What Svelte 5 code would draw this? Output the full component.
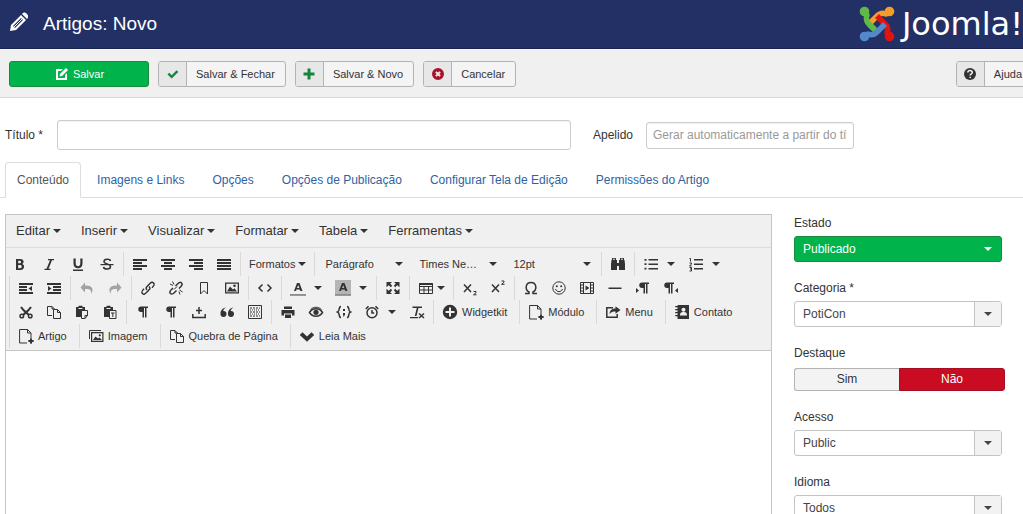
<!--
  App.svelte
  Joomla article editor: header, action toolbar, title fields, tabs,
  rich text editor and the publishing sidebar.
-->
<script lang="ts">
  type Item = {
    icon?: string;
    text?: string;
    label: string;
    kind?: 'split' | 'menu' | 'list' | 'text';
    dim?: boolean;
  };

  const TABS = [
    'Conteúdo',
    'Imagens e Links',
    'Opções',
    'Opções de Publicação',
    'Configurar Tela de Edição',
    'Permissões do Artigo',
  ];

  const MENUS = ['Editar', 'Inserir', 'Visualizar', 'Formatar', 'Tabela', 'Ferramentas'];

  const ACTIONS = [
    { icon: 'check', text: 'Salvar & Fechar', color: '#17833f' },
    { icon: 'plus', text: 'Salvar & Novo', color: '#17833f' },
    { icon: 'cancel', text: 'Cancelar', color: '#a8122a' },
  ];

  // 16x16 glyphs, drawn in currentColor
  const PILCROW = '<path d="M7 2.500h7v1.500h-1.500v9.500h-1.500v-9.500h-1v9.500h-1.500v-5.500h-1.500a2.700 2.700 0 0 1 0-5.500z"/>';
  const NEW_FILE = '<path class="l" d="M9 15H1.600V1.500H9.500L13 5v5M9.500 1.500V5H13M13 10.500v5M10.500 13h5"/><path d="M12 10.500h2v5h-2zM10.500 12h5v2h-5z"/>';
  const COPY = '<path class="l" d="M6 11.500H1.500v-9H6l2.500 2.500v1M6 2.500V5h2.500M7.500 5.500h4l3 3v6h-7zM11.500 5.500v3h3"/>';

  const ICONS: Record<string, string> = {
    edit: '<path d="M2 3h7L7 5H4v7h7V9l2-2v7H2z"/><path d="M6 8l6-6 2 2-6 6-2.500.5z"/>',
    check: '<path d="M2.500 8.500l1.700-1.700L6.700 9.200l4.900-4.900 1.700 1.700-6.600 6.600z"/>',
    plus: '<path d="M6.500 2.500h3v4h4v3h-4v4h-3v-4h-4v-3h4z"/>',
    cancel: '<path fill-rule="evenodd" d="M8 2a6 6 0 1 1 0 12A6 6 0 0 1 8 2zM5.200 6.600L6.600 8 5.200 9.400l1.400 1.400L8 9.400l1.400 1.400 1.400-1.400L9.400 8l1.400-1.400-1.400-1.400L8 6.600 6.600 5.200z"/>',
    help: '<circle cx="8" cy="8" r="6"/><path d="M5.800 6.500C6 3.800 10.500 4 10.300 6.500 10.200 8 8.200 7.900 8.200 9.500M8.200 10.700v1.300" fill="none" stroke="#eee" stroke-width="1.600"/>',
    bold: '<path fill-rule="evenodd" d="M4 3h4.500c3.500 0 4 4 1.700 5 3 1 2.300 6-1.500 6H4zM6.200 4.800v2.400H8c1.500 0 1.500-2.400 0-2.400zM6.200 9v3.200h2c2 0 2-3.200 0-3.200z"/>',
    italic: '<path d="M7 3h6v1.300h-2L7.500 12.700h2V14h-6v-1.300h2L9 4.300H7z"/>',
    underline: '<path d="M3.500 2.500h2.200v5c0 3.500 4.600 3.500 4.600 0v-5h2.200v5.300c0 6-9 6-9 0zM3 13.500h10V15H3z"/>',
    strike: '<path class="m" d="M11.500 5C11 2.500 5 2.500 5 5.500c0 3 6.500 1.800 6.500 5 0 3.500-6.500 3.300-7 .5"/><path d="M1.500 8h13v1.200h-13z"/>',
    left: '<path d="M1 3h14v2H1zM1 6h9v2H1zM1 9h14v2H1zM1 12h9v2H1z"/>',
    center: '<path d="M1 3h14v2H1zM4 6h8v2H4zM1 9h14v2H1zM4 12h8v2H4z"/>',
    right: '<path d="M1 3h14v2H1zM6 6h9v2H6zM1 9h14v2H1zM6 12h9v2H6z"/>',
    justify: '<path d="M1 3h14v2H1zM1 6h14v2H1zM1 9h14v2H1zM1 12h14v2H1z"/>',
    find: '<path d="M2 2h4v2h1v3h2V4h1V2h4v2h.5L15 8v6H9v-4H7v4H1V8l.500-4H2z"/><path d="M3 3.200h2M11 3.200h2" stroke="#f0f0f0"/>',
    bullets: '<path d="M5.500 3H15v1.500H5.500zM5.500 7.500H15V9H5.500zM5.500 12H15v1.500H5.500zM1.500 3h2v1.800h-2zM1.500 7.300h2v1.800h-2zM1.500 11.800h2v1.800h-2z"/>',
    numbers: '<path d="M6 3h9v1.500H6zM6 7.500h9V9H6zM6 12h9v1.500H6z"/><path class="l" d="M1.500 2.500h1v3M1.500 7h2v1l-2 2h2M1.500 11.500h2v1.500h-1.500M3.500 13v2h-2"/>',
    outdent: '<path d="M1 3h14v2H1zM1 6h8v2H1zM1 9h8v2H1zM1 12h14v2H1zM14 6v5l-3.500-2.500z"/>',
    indent: '<path d="M1 3h14v2H1zM7 6h8v2H7zM7 9h8v2H7zM1 12h14v2H1zM2 6v5l3.500-2.500z"/>',
    undo: '<path d="M6 2.500v3c8-.500 9 4.500 6 8.500.7-4-1-5.500-6-5v3.500L1.500 7.500z"/>',
    redo: '<path d="M10 2.500v3C2 5 1 10 4 14c-.7-4 1-5.500 6-5v3.500l4.500-5z"/>',
    link: '<path class="m" d="M7 10c-2-2-.5-3 2-5.500s3.200-2.800 4.500-1.500 1 2.300-1.500 4.800M9 6.500c2 2 .5 3-2 5.500s-3.200 2.800-4.500 1.500-1-2.300 1.500-4.800"/>',
    unlink: '<path class="m" d="M7.500 6L9.500 4c2-2 3-2 4-1s1 2.200-1 4l-1.500 1.500M8.500 10.500l-2 2c-2 2-3 2-4 1s-1-2.200 1-4L5 8"/><path class="l" d="M2 4l3 1.500M4.500 1.500L6 4.500M11 11.500l1 3M11.500 10l3 2M6 9.500l3-3"/>',
    bookmark: '<path class="l" d="M4.500 2.500h7v11.500L8 10.500 4.500 14z"/>',
    image: '<path fill-rule="evenodd" d="M1 2.500h14v11H1zM2.300 3.800v8.400h11.400V3.800z"/><path d="M3 11.500l3-5 3 3 1.500-1.200L13 11.500z"/><circle cx="10.500" cy="5.800" r="1.300"/>',
    code: '<path class="m" d="M5.500 4.500L2 8l3.500 3.500M10.500 4.500L14 8l-3.500 3.500"/>',
    forecolor: '<path fill-rule="evenodd" d="M7 3h2.500l3 8h-2.200l-.6-1.500H6.500L6 11H4zM8.200 5L7 8h2.300z"/><path d="M0 14.200h16v1.500H0z" opacity=".65"/>',
    backcolor: '<path d="M0 0h16v14H0z" fill="#b5b5b5"/><path fill-rule="evenodd" d="M7 3h2.500l3 8h-2.200l-.6-1.500H6.500L6 11H4zM8.200 5L7 8h2.300z"/><path d="M0 14.200h16v1.500H0z" opacity=".65"/>',
    fullscreen: '<path d="M1.500 2H7L5.200 3.800l2 2-1.400 1.400-2-2L1.500 7.200zM14.500 2H9l1.800 1.800-2 2 1.400 1.400 2-2 2.300 2zM1.500 14H7l-1.800-1.800 2-2-1.400-1.400-2 2-2.300-2zM14.500 14H9l1.800-1.800-2-2 1.400-1.400 2 2 2.300-2z"/>',
    table: '<path class="l" d="M1.500 3.500h13v10h-13zM1.500 6.500h13M1.500 10h13M6 6.500v7M10.500 6.500v7"/><path d="M1.500 3h13v2h-13z"/>',
    sub: '<path class="m" d="M2 4.500l7 7.500M9 4.500L2 12"/><path class="l" d="M11.500 11.500h2.500v1.300l-2.500 2h3"/>',
    sup: '<path class="m" d="M2 4.500l7 7.500M9 4.500L2 12"/><path class="l" d="M11.500 1h2.500v1.300l-2.500 2h3"/>',
    omega: '<path class="m" d="M2 13.500h4V12C1.500 9.500 2.500 2.500 8 2.500s6.500 7 2 9.500v1.500h4"/>',
    smile: '<circle class="l" cx="8" cy="8" r="6.200"/><circle cx="5.800" cy="6.300" r="1"/><circle cx="10.200" cy="6.300" r="1"/><path class="l" d="M4.500 9c1 3.500 6 3.500 7 0"/>',
    media: '<path class="l" d="M1.500 2.500h13v11h-13zM4.500 2.500v11M11.500 2.500v11M1.500 5h3M1.500 8h3M1.500 11h3M11.500 5h3M11.500 8h3M11.500 11h3"/><path d="M6.500 5.500l4 2.500-4 2.500z"/>',
    hr: '<path d="M1.500 7.500h13V9h-13z"/>',
    ltr: PILCROW + '<path d="M1 8v5l3-2.500z"/>',
    rtl: '<g transform="translate(-3 0)">' + PILCROW + '</g><path d="M15 8v5l-3-2.500z"/>',
    cut: '<path class="h" d="M3 3C5.500 7 9 9 11 11M13 3C10.500 7 7 9 5 11"/><circle class="m" cx="3.800" cy="12" r="1.800"/><circle class="m" cx="12.200" cy="12" r="1.800"/>',
    copy: COPY,
    paste: '<path d="M2 3h2.500V1.800h4V3H11v3H7.500v7H2z"/><path d="M4.500 4.500h4" stroke="#f0f0f0"/><path class="l" d="M7.500 6.500h6v5L11 14.500H7.500zM13.500 11.500H11v3"/>',
    pastetext: '<path d="M2 3h2.500V1.800h4V3H11v3H7.500v7H2z"/><path d="M4.500 4.500h4" stroke="#f0f0f0"/><path class="l" d="M7.500 6.500h6.500v8H7.500zM9 9h3.500M10.800 9v4"/>',
    pilcrow: '<g transform="translate(-1 0)">' + PILCROW + '</g>',
    nonbreaking: '<path class="m" d="M1.800 10v3.500h12.400V10M8 3v7M5 6.500h6"/>',
    quote: '<path d="M7 3.500C4.500 5 4.300 6 4.300 7a3 3 0 1 1-2.800 3C1.300 6.500 3.500 4 7 3.500zM14.500 3.500C12 5 11.800 6 11.800 7A3 3 0 1 1 9 10c-.2-3.500 2-6 5.500-6.500z"/>',
    template: '<path class="l" d="M1.500 1.500h13v13h-13z"/><path d="M3 4h10M3 8h10M3 12h10" stroke="currentColor" stroke-width="1" stroke-dasharray="2 1"/><path d="M3 6h10M3 10h10" stroke="currentColor" stroke-width="1" stroke-dasharray="1 1"/>',
    print: '<path d="M4 2.500h8V5H4zM1.500 6h13v5.500H12V9.500H4v2H1.500zM5 10.500h6V14H5z"/>',
    preview: '<path class="m" d="M1.500 8.500c3-5 10-5 13 0-3 5-10 5-13 0z"/><circle cx="8" cy="8.300" r="2.600"/><path class="l" d="M2.500 5.500c3-3 8-3 11 0"/>',
    snippet: '<path class="m" d="M5 2.500C2 2.500 4.500 7 1.500 8 4.500 9 2 13.500 5 13.500M11 2.500c3 0 .5 4.500 3.500 5.500-3 1-.5 5.500-3.500 5.500"/><path d="M7 5h2v2H7zM7 9h2v2l-1.500 1.500H6.800L7.500 11H7z"/>',
    clock: '<circle class="m" cx="8" cy="8.800" r="5"/><path class="m" d="M8 6v3h2.200M1.800 5L4.500 2.200M11.500 2.200L14.200 5"/>',
    clear: '<path d="M3.500 2.500H13V4H9.500L7.500 12H5.800l2-8H3.500zM1 13h8v1.300H1z"/><path class="m" d="M10 9.500l5 4.500M15 9.500L10 14"/>',
    widgetkit: '<path fill-rule="evenodd" d="M8 .8a7.200 7.200 0 1 1 0 14.400A7.200 7.200 0 0 1 8 .8zM7 3.500V7H3.500v2H7v3.500h2V9h3.500V7H9V3.500z"/>',
    newfile: NEW_FILE,
    share: '<path class="m" d="M8 3.800H1.800v9.400h10.400V10"/><path d="M10.500 2.200L15.500 6l-5 3.800V7.500C8 7.500 6 8 4.500 10c.2-4 2.800-5.500 6-5.500z"/>',
    contact: '<path d="M3.500 1H15v14H3.500zM1.200 2h3v1.200h-3zM1.200 5h3v1.200h-3zM1.200 8h3v1.200h-3zM1.200 11h3v1.200h-3z"/><circle cx="9.500" cy="5.800" r="2" fill="#f0f0f0"/><path d="M6 11.500c0-3 1.500-3.500 3.500-3.500s3.500.5 3.500 3.500z" fill="#f0f0f0"/>',
    pictures: '<path class="l" d="M1.500 11V2.500H13"/><path fill-rule="evenodd" d="M3 4h12.500v10H3zM4.200 5.200v7.600h10.100V5.200z"/><path d="M5 12l2.500-3.500L10 10.500l1.500-1L14 12z"/><circle cx="11.800" cy="7.300" r="1.100"/>',
    chevron: '<path d="M.8 7l2.700-2.700L8 8.500l4.500-4.200L15.200 7 8 13.800z"/>',
  };

  const ROWS: Item[][][] = [
    [
      [
        { icon: 'bold', label: 'Negrito' },
        { icon: 'italic', label: 'Itálico' },
        { icon: 'underline', label: 'Sublinhar' },
        { icon: 'strike', label: 'Riscar' },
      ],
      [
        { icon: 'left', label: 'Alinhar à esquerda' },
        { icon: 'center', label: 'Centralizar' },
        { icon: 'right', label: 'Alinhar à direita' },
        { icon: 'justify', label: 'Justificar' },
      ],
      [{ text: 'Formatos', label: 'Formatos', kind: 'menu' }],
      [
        { text: 'Parágrafo', label: 'Bloco', kind: 'list' },
        { text: 'Times Ne…', label: 'Fonte', kind: 'list' },
        { text: '12pt', label: 'Tamanho', kind: 'list' },
      ],
      [{ icon: 'find', label: 'Localizar' }],
      [
        { icon: 'bullets', label: 'Lista não ordenada', kind: 'split' },
        { icon: 'numbers', label: 'Lista ordenada', kind: 'split' },
      ],
    ],
    [
      [
        { icon: 'outdent', label: 'Diminuir recuo' },
        { icon: 'indent', label: 'Aumentar recuo' },
      ],
      [
        { icon: 'undo', label: 'Desfazer', dim: true },
        { icon: 'redo', label: 'Refazer', dim: true },
      ],
      [
        { icon: 'link', label: 'Inserir link' },
        { icon: 'unlink', label: 'Remover link' },
        { icon: 'bookmark', label: 'Âncora' },
        { icon: 'image', label: 'Inserir imagem' },
      ],
      [{ icon: 'code', label: 'Código fonte' }],
      [
        { icon: 'forecolor', label: 'Cor do texto', kind: 'split' },
        { icon: 'backcolor', label: 'Cor do fundo', kind: 'split' },
      ],
      [{ icon: 'fullscreen', label: 'Tela cheia' }],
      [{ icon: 'table', label: 'Tabela', kind: 'menu' }],
      [
        { icon: 'sub', label: 'Subscrito' },
        { icon: 'sup', label: 'Sobrescrito' },
      ],
      [
        { icon: 'omega', label: 'Caracteres especiais' },
        { icon: 'smile', label: 'Emoticons' },
        { icon: 'media', label: 'Inserir vídeo' },
        { icon: 'hr', label: 'Linha horizontal' },
        { icon: 'ltr', label: 'Da esquerda para a direita' },
        { icon: 'rtl', label: 'Da direita para a esquerda' },
      ],
    ],
    [
      [
        { icon: 'cut', label: 'Recortar' },
        { icon: 'copy', label: 'Copiar' },
        { icon: 'paste', label: 'Colar' },
        { icon: 'pastetext', label: 'Colar como texto' },
      ],
      [
        { icon: 'pilcrow', label: 'Mostrar blocos' },
        { icon: 'pilcrow', label: 'Caracteres invisíveis' },
        { icon: 'nonbreaking', label: 'Espaço não separável' },
        { icon: 'quote', label: 'Citação' },
        { icon: 'template', label: 'Modelo' },
      ],
      [
        { icon: 'print', label: 'Imprimir' },
        { icon: 'preview', label: 'Pré-visualizar' },
        { icon: 'snippet', label: 'Amostra de código' },
        { icon: 'clock', label: 'Data e hora', kind: 'split' },
        { icon: 'clear', label: 'Limpar formatação' },
      ],
      [{ icon: 'widgetkit', text: 'Widgetkit', label: 'Widgetkit', kind: 'text' }],
      [{ icon: 'newfile', text: 'Módulo', label: 'Módulo', kind: 'text' }],
      [{ icon: 'share', text: 'Menu', label: 'Menu', kind: 'text' }],
      [{ icon: 'contact', text: 'Contato', label: 'Contato', kind: 'text' }],
    ],
    [
      [{ icon: 'newfile', text: 'Artigo', label: 'Artigo', kind: 'text' }],
      [{ icon: 'pictures', text: 'Imagem', label: 'Imagem', kind: 'text' }],
      [{ icon: 'copy', text: 'Quebra de Página', label: 'Quebra de Página', kind: 'text' }],
      [{ icon: 'chevron', text: 'Leia Mais', label: 'Leia Mais', kind: 'text' }],
    ],
  ];

  let activeTab = $state(TABS[0]);
  let featured = $state('nao');
  let title = $state('');
  let alias = $state('');
</script>

{#snippet glyph(name: string)}
  <svg class="glyph" viewBox="0 0 16 16" width="16" height="16" aria-hidden="true">{@html ICONS[name]}</svg>
{/snippet}

{#snippet picker(id: string, label: string, value: string, green: boolean)}
  <div class="field">
    <label for={id}>{label}</label>
    <div class="picker" class:green>
      <select {id}><option>{value}</option></select>
      <span class="arrow"><i class="caret"></i></span>
    </div>
  </div>
{/snippet}

<div class="page">
  <header>
    <h1>
      <svg viewBox="0 0 20 20" width="20" height="20" aria-hidden="true">
        <path fill="#fff" fill-rule="evenodd" d="M1 19l1-6L12 3l5 5L7 18zM4 14l2 2L14 8l-2-2z" />
        <path fill="#fff" d="M13 2c1.500-2 3-2 4.500-.5S20 5 18 7z" />
        <path stroke="#fff" stroke-width="1" d="M5 15l8-8" />
      </svg>
      Artigos: Novo
    </h1>
    <a class="logo" href="#joomla">
      <svg viewBox="0 0 36 36" width="36" height="36" aria-hidden="true">
        {#each [['#5fb947', 0], ['#f49c2c', 90], ['#e2140f', 180], ['#5488cb', 270]] as [color, turn]}
          <g transform="rotate({turn} 18 18)" fill="none" stroke={color} stroke-width="5.500" stroke-linejoin="round">
            <circle cx="5.500" cy="5.500" r="4.800" fill={color} stroke="none" />
            <path d="M5.500 5.500L8 9Q6 14 10 18L18 26" />
          </g>
        {/each}
        <path d="M8 15Q8.500 16.500 10 18L15 23" fill="none" stroke="#5fb947" stroke-width="5.500" />
      </svg>
      <span>Joomla!</span>
    </a>
  </header>

  <div class="actions">
    <button class="save">{@render glyph('edit')}Salvar</button>
    {#each ACTIONS as a}
      <button class="action">
        <span class="badge" style="color: {a.color}">{@render glyph(a.icon)}</span>
        <span class="caption">{a.text}</span>
      </button>
    {/each}
    <button class="action help">
      <span class="badge">{@render glyph('help')}</span>
      <span class="caption">Ajuda</span>
    </button>
  </div>

  <div class="titles">
    <label for="title">Título *</label>
    <input id="title" class="title" type="text" bind:value={title} />
    <label for="alias">Apelido</label>
    <input id="alias" class="alias" type="text" placeholder="Gerar automaticamente a partir do título" bind:value={alias} />
  </div>

  <nav class="tabs">
    {#each TABS as t}
      <a href="#tab" class:active={t === activeTab} onclick={() => (activeTab = t)}>{t}</a>
    {/each}
  </nav>

  <main>
    <section class="editor">
      <div class="menubar">
        {#each MENUS as m}
          <button>{m}<i class="caret"></i></button>
        {/each}
      </div>
      <div class="toolbars">
        {#each ROWS as row}
          <div class="row">
            {#each row as group}
              <div class="group">
                {#each group as item}
                  <button class={item.kind ?? 'plain'} class:dim={item.dim} aria-label={item.label}>
                    {#if item.icon}{@render glyph(item.icon)}{/if}
                    {#if item.text}<span>{item.text}</span>{/if}
                    {#if item.kind && item.kind !== 'text'}<i class="caret"></i>{/if}
                  </button>
                {/each}
              </div>
            {/each}
          </div>
        {/each}
      </div>
      <textarea aria-label="Texto do artigo"></textarea>
    </section>

    <aside>
      {@render picker('state', 'Estado', 'Publicado', true)}
      {@render picker('category', 'Categoria *', 'PotiCon', false)}
      <fieldset class="field">
        <legend>Destaque</legend>
        <div class="toggle">
          <label class="yes"><input type="radio" name="featured" value="sim" bind:group={featured} />Sim</label>
          <label class="no"><input type="radio" name="featured" value="nao" bind:group={featured} />Não</label>
        </div>
      </fieldset>
      {@render picker('access', 'Acesso', 'Public', false)}
      {@render picker('language', 'Idioma', 'Todos', false)}
    </aside>
  </main>
</div>

<style>
  :global(html) {
    scrollbar-width: none;
  }
  :global(body) {
    margin: 0;
    background: #fff;
  }
  .page {
    overflow-x: clip;
    font: 12px/18px "Liberation Sans", Arial, sans-serif;
    color: #333;
  }
  .page * {
    box-sizing: border-box;
  }
  button,
  input,
  select,
  textarea {
    margin: 0;
    font: inherit;
    color: inherit;
  }
  button {
    padding: 0;
    border: 0;
    background: none;
    white-space: nowrap;
  }
  .glyph {
    flex: none;
    display: block;
    fill: currentColor;
  }
  .glyph :global(.l),
  .glyph :global(.m),
  .glyph :global(.h) {
    fill: none;
    stroke: currentColor;
    stroke-width: 1px;
  }
  .glyph :global(.m) {
    stroke-width: 1.5px;
  }
  .glyph :global(.h) {
    stroke-width: 2px;
  }
  .caret {
    flex: none;
    border: 4px solid transparent;
    border-top-color: currentColor;
    border-bottom: 0;
  }

  header {
    display: flex;
    justify-content: space-between;
    align-items: center;
    height: 49px;
    padding-left: 9px;
    background: #223066;
    border-bottom: 1px solid #182350;
  }
  h1 {
    display: flex;
    align-items: center;
    gap: 14px;
    margin: 0;
    font-size: 19px;
    line-height: 24px;
    font-weight: 400;
    color: #fff;
  }
  h1 svg {
    margin-bottom: 4px;
  }
  .logo {
    display: flex;
    align-items: center;
    gap: 7px;
    color: #fff;
    font: 32px/36px "DejaVu Sans", sans-serif;
    text-decoration: none;
  }

  .actions {
    display: flex;
    gap: 9px;
    padding: 11px 0 10px 9px;
    background: #f0f0f0;
    border-top: 1px solid #f6f6fa;
    border-bottom: 1px solid #d9d9d9;
    font-size: 11px;
  }
  .save {
    display: flex;
    align-items: center;
    justify-content: center;
    gap: 3px;
    width: 140px;
    height: 26px;
    border: 1px solid #1b8a3d;
    border-radius: 3px;
    background: #00b34a;
    color: #fff;
  }
  .action {
    display: flex;
    height: 26px;
    border: 1px solid #b3b3b3;
    border-radius: 3px;
    background: #f4f4f4;
    overflow: hidden;
  }
  .badge {
    display: flex;
    align-items: center;
    justify-content: center;
    width: 28px;
    height: 24px;
    border-right: 1px solid #b3b3b3;
    background: #e7e7e7;
  }
  .caption {
    padding: 0 10px 0 9px;
    line-height: 24px;
  }
  .help {
    margin-left: auto;
    margin-right: -10px;
  }

  .titles {
    display: flex;
    align-items: center;
    padding: 22px 169px 0 5px;
  }
  .titles input {
    border: 1px solid #ccc;
    border-radius: 3px;
    background: #fff;
    box-shadow: inset 0 1px 1px rgba(0, 0, 0, 0.06);
  }
  .title {
    flex: 1;
    min-width: 0;
    height: 30px;
    margin: 0 22px 0 14px;
    padding: 4px 6px;
  }
  .titles .alias {
    width: 208px;
    height: 27px;
    margin-left: 13px;
    padding: 3px 6px;
  }
  .alias::placeholder {
    color: #999;
    opacity: 1;
  }

  .tabs {
    display: flex;
    gap: 4px;
    margin-top: 12px;
    padding-left: 5px;
    border-bottom: 1px solid #ddd;
  }
  .tabs a {
    padding: 8px 11px;
    margin-bottom: -1px;
    border: 1px solid transparent;
    border-radius: 4px 4px 0 0;
    color: #2f62a3;
    text-decoration: none;
    white-space: nowrap;
  }
  .tabs .active {
    border-color: #ddd;
    border-bottom-color: #fff;
    background: #fff;
    color: #555;
  }

  main {
    display: grid;
    grid-template-columns: minmax(0, 1fr) 211px;
    gap: 22px;
    padding: 16px 18px 0 5px;
  }
  .editor {
    display: flex;
    flex-direction: column;
    border: 1px solid #c5c5c5;
    background: #f0f0f0;
  }
  .menubar {
    display: flex;
    gap: 2px;
    height: 33px;
    padding-left: 1px;
    border-bottom: 1px solid #dcdcdc;
    font-size: 13px;
  }
  .menubar button {
    display: flex;
    align-items: center;
    gap: 3px;
    padding: 0 9px;
  }
  .toolbars {
    padding: 4px 0 2px;
    border-bottom: 1px solid #c5c5c5;
    font-size: 11px;
  }
  .row {
    display: flex;
    flex-wrap: wrap;
    padding-left: 3px;
  }
  .row:first-child {
    padding-left: 0;
  }
  .group {
    display: flex;
    height: 24px;
    padding: 0 2px;
    border-left: 1px solid #d9d9d9;
  }
  .row:first-child .group:first-child {
    gap: 1px;
    padding-left: 0;
    border-left: 0;
  }
  .group button {
    display: flex;
    align-items: center;
    padding: 0 6px;
  }
  .group .menu {
    gap: 3px;
  }
  .group .split {
    gap: 8px;
    padding-right: 7px;
  }
  .group .list {
    justify-content: space-between;
    width: 94px;
    padding: 0 8px;
  }
  .group .text {
    gap: 4px;
    padding-right: 10px;
  }
  .dim {
    color: #a3a3a3;
  }
  textarea {
    flex: 1;
    min-height: 160px;
    border: 0;
    padding: 8px;
    background: #fff;
    resize: none;
  }

  .field {
    margin: 0 0 17px;
    padding: 0;
    border: 0;
    min-width: 0;
  }
  .field > label,
  legend {
    display: block;
    margin-bottom: 4px;
    padding: 0;
  }
  .picker {
    display: grid;
    grid-template-columns: 1fr 27px;
    height: 26px;
    margin-right: 3px;
    border: 1px solid #c4c4c4;
    border-radius: 3px;
    background: #fff;
    color: #444;
  }
  .picker select {
    grid-area: 1 / 1 / 2 / 3;
    appearance: none;
    width: 100%;
    padding: 0 30px 0 8px;
    border: 0;
    background: none;
  }
  .arrow {
    grid-area: 1 / 2;
    display: flex;
    align-items: center;
    justify-content: center;
    border-left: 1px solid #c4c4c4;
    background: #f2f2f2;
    pointer-events: none;
  }
  .green {
    border-color: #1b8a3d;
    background: #00b34a;
    color: #fff;
  }
  .green .arrow {
    border-left-color: transparent;
    background: none;
  }
  .toggle {
    display: flex;
    height: 23px;
    margin-top: 2px;
    line-height: 21px;
    text-align: center;
  }
  .toggle label {
    flex: 1;
    border: 1px solid #b3b3b3;
    background: #f3f3f3;
  }
  .toggle .yes {
    border-right: 0;
    border-radius: 3px 0 0 3px;
  }
  .toggle .no {
    border-radius: 0 3px 3px 0;
  }
  .toggle label:has(input:checked) {
    border-color: #a50d20;
    background: #c90c22;
    color: #fff;
  }
  .toggle input {
    appearance: none;
    width: 0;
    height: 0;
    margin: 0;
  }
</style>
